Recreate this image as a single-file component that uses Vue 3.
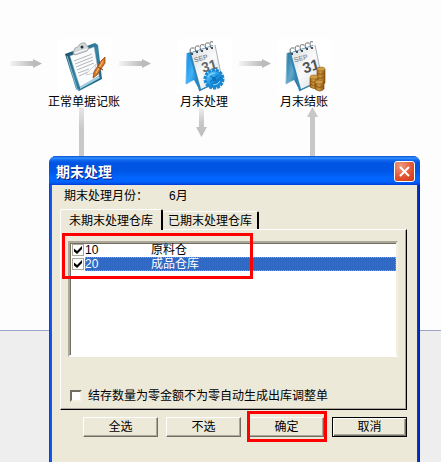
<script setup>
import { ref } from "vue";

const activeTab = ref("pending");
const tabs = [
  { id: "pending", label: "未期末处理仓库" },
  { id: "done", label: "已期末处理仓库" },
];

const warehouses = ref([
  { code: "10", name: "原料仓", checked: true },
  { code: "20", name: "成品仓库", checked: true },
]);
const selected = ref("20");
const autoAdjust = ref(false);

const setAll = (value) => {
  warehouses.value.forEach((w) => {
    w.checked = value;
  });
};
</script>

<template>
  <main class="page">
    <section class="canvas">
      <svg class="lines" width="400" height="160" viewBox="0 0 400 160">
        <defs>
          <linearGradient id="fade-h">
            <stop offset="0" stop-color="#f4f4f4" />
            <stop offset="0.7" stop-color="#bdbdbd" />
            <stop offset="1" stop-color="#b8b8b8" />
          </linearGradient>
          <linearGradient id="fade-v" x2="0" y2="1">
            <stop offset="0" stop-color="#eee" />
            <stop offset="0.5" stop-color="#c8c8c8" />
            <stop offset="1" stop-color="#bbb" />
          </linearGradient>
          <linearGradient id="fade-stem" x2="0" y2="1">
            <stop offset="0" stop-color="#e6e6e6" />
            <stop offset="0.4" stop-color="#c9c9c9" />
          </linearGradient>
        </defs>
        <path id="arrow" d="M10 61H33V59L42 63.500L33 68V66H10Z" fill="url(#fade-h)" />
        <use href="#arrow" x="109" />
        <use href="#arrow" x="229" />
        <path d="M79 108H84V160H79Z" fill="url(#fade-stem)" />
        <path d="M199 108H204V127H207L201.500 137L196 127H199Z" fill="url(#fade-v)" />
        <path d="M310 160V117H307L312.500 107L318 117H315V160Z" fill="#c8c8c8" />
      </svg>

      <a href="#voucher" class="node voucher">
        <svg width="55" height="55" viewBox="0 0 55 55">
          <defs>
            <linearGradient id="board" x2="1" y2="1">
              <stop offset="0" stop-color="#16445f" />
              <stop offset="0.5" stop-color="#3785a5" />
              <stop offset="1" stop-color="#1c5878" />
            </linearGradient>
          </defs>
          <path d="M8 15L38 4L41 6L45 40L22 52L19 50Z" fill="url(#board)" />
          <path d="M10 17L20 50L22 51" fill="none" stroke="#82bdd2" />
          <path d="M13 17L37 8L42 37L23 48Z" fill="#fafbfc" stroke="#b3c3cc" stroke-width="0.500" />
          <path d="M23 48L42 37L43 39L23 50Z" fill="#9fd2e2" />
          <path
            d="M17 22L35 15M18 25L36 18M19 28L36 21M20 31L37 24M21 34L32 30M22 37L31 33"
            stroke="#b4b7ba"
            stroke-width="1"
          />
          <path d="M30 34L39 25L37 34L29 36Z" fill="none" stroke="#d0d3d6" />
          <path d="M16 14L18 9L21 8Q23 3 28 4L30 7L32 9L30 12L18 16Z" fill="#d3d8da" stroke="#8a9397" stroke-width="0.700" />
          <circle cx="25" cy="8" r="1.500" fill="#26363e" />
          <path d="M18 14L30 10" stroke="#fff" />
          <path d="M48 18L44 22L37 33L36 39L40 36L48 24Z" fill="#d97925" stroke="#8d4313" stroke-width="0.800" />
          <path d="M46 22L39 34" stroke="#ffc374" />
          <path d="M41 28L46 31" stroke="#733813" />
        </svg>
        <span>正常单据记账</span>
      </a>

      <a href="#process" class="node process">
        <svg width="55" height="55" viewBox="0 0 55 55">
          <defs>
            <linearGradient id="stand-blue" x2="1" y2="1">
              <stop offset="0" stop-color="#1787d3" />
              <stop offset="0.5" stop-color="#3fb2fb" />
              <stop offset="1" stop-color="#0b62b4" />
            </linearGradient>
            <linearGradient id="stand-teal" x2="1" y2="1">
              <stop offset="0" stop-color="#256f98" />
              <stop offset="0.5" stop-color="#5fa9cd" />
              <stop offset="1" stop-color="#1a567c" />
            </linearGradient>
            <linearGradient id="sheet" x2="1" y2="1">
              <stop offset="0" stop-color="#d4dbe0" />
              <stop offset="0.5" stop-color="#fafafa" />
              <stop offset="1" stop-color="#d3dae0" />
            </linearGradient>
            <linearGradient id="gear" x2="1" y2="1">
              <stop offset="0" stop-color="#74d2ff" />
              <stop offset="0.4" stop-color="#2ba4ee" />
              <stop offset="0.7" stop-color="#0f7bc8" />
              <stop offset="1" stop-color="#35b1f2" />
            </linearGradient>
            <g id="calendar">
              <path d="M12 14L36 6L45 41L22 52Z" fill="#2f87b8" />
              <path d="M14 14L38 6L45 40L24 50Z" fill="url(#sheet)" />
              <path d="M38 6L45 40" stroke="#a9b4bb" />
              <path d="M22 52L45 41" stroke="#397eaa" />
              <path
                d="M14 15Q11 8 17 9M19 13Q16 6 22 7M24 12Q21 4 27 6M29 10Q26 3 32 4M34 9Q31 1 36 3"
                fill="none"
                stroke="#66696c"
                stroke-width="1"
              />
              <path d="M15 16V14M20 14V12M25 13V11M30 11V9M35 10V8" stroke="#4b4f53" stroke-width="2" />
            </g>
          </defs>
          <path d="M10 14L14 13L22 50L17 41L9 45Z" fill="url(#stand-blue)" />
          <path d="M10 14L9 45L14 42" fill="none" stroke="#5db7f4" />
          <use href="#calendar" />
          <g transform="rotate(-16 23 20)" fill="#8e9295" class="sheet-text">
            <text x="17" y="22" font-size="7">SEP</text>
            <text x="22" y="34" font-size="14" fill="#62676b">31</text>
          </g>
          <circle cx="37" cy="40" r="9" fill="url(#gear)" />
          <circle cx="37" cy="40" r="9" fill="none" stroke="#1b86d2" stroke-width="3" stroke-dasharray="3 1" />
          <circle cx="37" cy="40" r="7" fill="url(#gear)" />
          <path d="M31 38Q33 34 38 34M43 42Q41 46 36 46" fill="none" stroke="#8ddcff" stroke-width="1" />
          <path d="M33 37Q37 38 39 42M41 36Q37 39 33 43" fill="none" stroke="#0c6bb2" />
          <circle cx="37" cy="40" r="2" fill="#0f6fb8" />
        </svg>
        <span>月末处理</span>
      </a>

      <a href="#closing" class="node closing">
        <svg width="55" height="55" viewBox="0 0 55 55">
          <defs>
            <linearGradient id="gold">
              <stop offset="0" stop-color="#9a6416" />
              <stop offset="0.4" stop-color="#cc9a45" />
              <stop offset="1" stop-color="#8d5612" />
            </linearGradient>
          </defs>
          <path d="M10 14L14 13L22 50L17 41L9 45Z" fill="url(#stand-teal)" />
          <path d="M10 14L9 45L14 42" fill="none" stroke="#86b9d3" />
          <use href="#calendar" />
          <g transform="rotate(-16 23 20)" fill="#96999c" class="sheet-text">
            <text x="17" y="22" font-size="7">SEP</text>
            <text x="23" y="35" font-size="15" fill="#4e5357">31</text>
          </g>
          <g fill="url(#gold)" stroke="#85500e" stroke-width="0.700">
            <path d="M40 31V45Q44 48 48 44V30Z" />
            <path d="M33 39V48Q37 51 41 48V39Z" />
            <path d="M38 43V50Q43 54 47 50V43Z" />
          </g>
          <path d="M40 34Q44 37 48 33M40 38Q44 41 48 37M33 42Q37 45 40 42M33 45Q37 48 40 45M38 47Q43 50 47 47" fill="none" stroke="#91570f" />
          <g fill="#cf9d46" stroke="#a26b22" stroke-width="0.700">
            <ellipse cx="44" cy="30" rx="4" ry="2" />
            <ellipse cx="37" cy="38" rx="4" ry="2" />
            <ellipse cx="42" cy="43" rx="4" ry="2" />
          </g>
        </svg>
        <span>月末结账</span>
      </a>
    </section>
    <div class="footer-band"></div>

    <section class="dialog" role="dialog" aria-labelledby="dialog-title">
      <header class="titlebar">
        <h1 id="dialog-title">期末处理</h1>
        <button class="close" type="button" aria-label="关闭">
          <svg width="11" height="11" viewBox="0 0 11 11">
            <path d="M1 1L10 10M10 1L1 10" stroke="#fff" stroke-width="2" />
          </svg>
        </button>
      </header>

      <form class="body" @submit.prevent>
        <p class="month"><span>期末处理月份：</span><span>6月</span></p>

        <div class="tabs" role="tablist">
          <button
            v-for="tab in tabs"
            :key="tab.id"
            type="button"
            role="tab"
            class="tab"
            :class="{ active: activeTab === tab.id }"
            :aria-selected="activeTab === tab.id"
            @click="activeTab = tab.id"
          >
            {{ tab.label }}
          </button>
        </div>

        <div class="panel">
          <ul class="list">
            <li
              v-for="w in warehouses"
              :key="w.code"
              :class="{ selected: selected === w.code }"
              @click="selected = w.code"
            >
              <label>
                <input type="checkbox" v-model="w.checked" />
                <span class="row"
                  ><span class="code">{{ w.code }}</span
                  ><span>{{ w.name }}</span></span
                >
              </label>
            </li>
          </ul>
          <div class="mark mark-list"></div>
          <label class="option">
            <input type="checkbox" v-model="autoAdjust" />
            <span>结存数量为零金额不为零自动生成出库调整单</span>
          </label>
        </div>

        <div class="actions">
          <button type="button" @click="setAll(true)">全选</button>
          <button type="button" @click="setAll(false)">不选</button>
          <div class="confirm">
            <button type="submit">确定</button>
            <div class="mark mark-confirm"></div>
          </div>
          <button type="button" class="default">取消</button>
        </div>
      </form>
    </section>
  </main>
</template>

<style>
body {
  margin: 0;
}
</style>

<style scoped>
* {
  box-sizing: border-box;
}

.page {
  position: relative;
  display: flex;
  flex-direction: column;
  min-height: 100vh;
  overflow: hidden;
  background: #fdfdfd;
  color: #000;
  font-family: "Liberation Sans", "Noto Sans CJK SC", sans-serif;
  font-size: 12px;
  line-height: 14px;
}

.canvas {
  position: relative;
  height: 330px;
}

.lines {
  position: absolute;
  left: 0;
  top: 0;
}

.footer-band {
  flex: 1;
  min-height: 132px;
  border-top: 1px solid #9aa3c9;
  background: #eee;
}

.node {
  position: absolute;
  top: 39px;
  display: flex;
  flex-direction: column;
  align-items: center;
  gap: 1px;
  width: 80px;
  color: #000;
  text-decoration: none;
}
.node svg {
  background: #fff;
}
.voucher {
  left: 44px;
}
.process {
  left: 164px;
}
.closing {
  left: 264px;
}
.sheet-text {
  font-family: "Liberation Sans", sans-serif;
  font-weight: bold;
}

.dialog {
  position: absolute;
  top: 156px;
  bottom: 0;
  left: 49px;
  right: 21px;
  display: flex;
  flex-direction: column;
  border-radius: 7px 7px 0 0;
  background: linear-gradient(90deg, #0831d9, #1663ef 2px, #0855dd 3px, #0855dd 50%, #0441d8 calc(100% - 3px), #001ea0);
}

.titlebar {
  display: flex;
  align-items: center;
  justify-content: space-between;
  height: 29px;
  padding: 2px 5px 0 7px;
  border-radius: 7px 7px 0 0;
  background: linear-gradient(#0a4bd0, #3093ff 2px, #1268ee 4px, #0054e3 7px, #0055e5 15px, #0066ff 22px, #0062fa 26px, #003dd7);
}
.titlebar h1 {
  margin: 0;
  color: #fff;
  font-size: 14px;
  line-height: 16px;
  text-shadow: 1px 1px #0a1883;
}

.close {
  display: grid;
  place-items: center;
  width: 21px;
  height: 21px;
  padding: 0;
  border: 1px solid #fff;
  border-radius: 3px;
  background: radial-gradient(circle at 30% 20%, #f09a82, #e2502c 60%, #c93a10);
}

.body {
  flex: 1;
  margin: 0 3px;
  padding: 4px 10px 0 8px;
  background: #ece9d8;
}

.month {
  display: flex;
  gap: 21px;
  margin: 0;
  padding-left: 4px;
}

.tabs {
  display: flex;
  align-items: flex-end;
  height: 20px;
  margin-top: 6px;
}
.tab {
  height: 18px;
  padding: 1px 5px 0;
  border: solid;
  border-width: 1px 2px 0 0;
  border-color: #fff #000 transparent transparent;
  border-radius: 2px 2px 0 0;
  background: #ece9d8;
  color: #000;
  font: inherit;
  white-space: nowrap;
}
.tab.active {
  position: relative;
  z-index: 1;
  height: 21px;
  margin-bottom: -1px;
  padding: 1px 8px 0;
  border-width: 1px 2px 0 1px;
  border-left-color: #fff;
}

.panel {
  position: relative;
  height: 181px;
  padding: 11px 8px 0 7px;
  border: 1px solid;
  border-color: #fff #000 #000 #fff;
  box-shadow: inset -1px -1px #aca899;
}

.list {
  height: 116px;
  margin: 0;
  padding: 0 0 0 2px;
  border: 2px solid;
  border-color: #aca899 #f1efe2 #fff #aca899;
  box-shadow: inset 1px 1px #716f64;
  background: #fff;
  list-style: none;
}
.list label {
  display: flex;
  align-items: center;
  gap: 1px;
  height: 14px;
}
.row {
  display: flex;
  flex: 1;
  height: 14px;
}
.code {
  width: 66px;
}
.selected .row {
  outline: 1px dotted #ce953a;
  outline-offset: -1px;
  background: #316ac5;
  color: #fff;
}

input[type="checkbox"] {
  appearance: none;
  display: grid;
  place-items: center;
  flex: none;
  width: 12px;
  height: 12px;
  margin: 0;
  border: 1px solid #aca899;
  background: #fff;
}
input[type="checkbox"]:checked::before {
  content: "";
  width: 8px;
  height: 8px;
  background: #000;
  clip-path: polygon(0 30%, 38% 62%, 100% 0, 100% 38%, 38% 100%, 0 68%);
}

.option {
  display: flex;
  align-items: center;
  gap: 6px;
  margin: 32px 0 0 2px;
}
.option input[type="checkbox"] {
  border: 2px solid;
  border-color: #716f64 #f1efe2 #f1efe2 #716f64;
}

.actions {
  display: flex;
  justify-content: flex-end;
  gap: 8px;
  margin-top: 7px;
}
.actions button {
  width: 75px;
  height: 20px;
  padding: 0;
  border: 1px solid;
  border-color: #fff #716f64 #716f64 #fff;
  background: #ece9d8;
  box-shadow: inset -1px -1px #aca899;
  color: #000;
  font: inherit;
}
.actions .default {
  border-color: #000;
  box-shadow: inset 1px 1px #fff, inset -1px -1px #716f64, inset -2px -2px #aca899;
}

.confirm {
  position: relative;
}

/* red call-out frames */
.mark {
  position: absolute;
  border: 3px solid #f00;
  pointer-events: none;
}
.mark-list {
  top: 3px;
  left: 1px;
  width: 191px;
  height: 46px;
}
.mark-confirm {
  top: -6px;
  right: -3px;
  bottom: -5px;
  left: -2px;
}
</style>
